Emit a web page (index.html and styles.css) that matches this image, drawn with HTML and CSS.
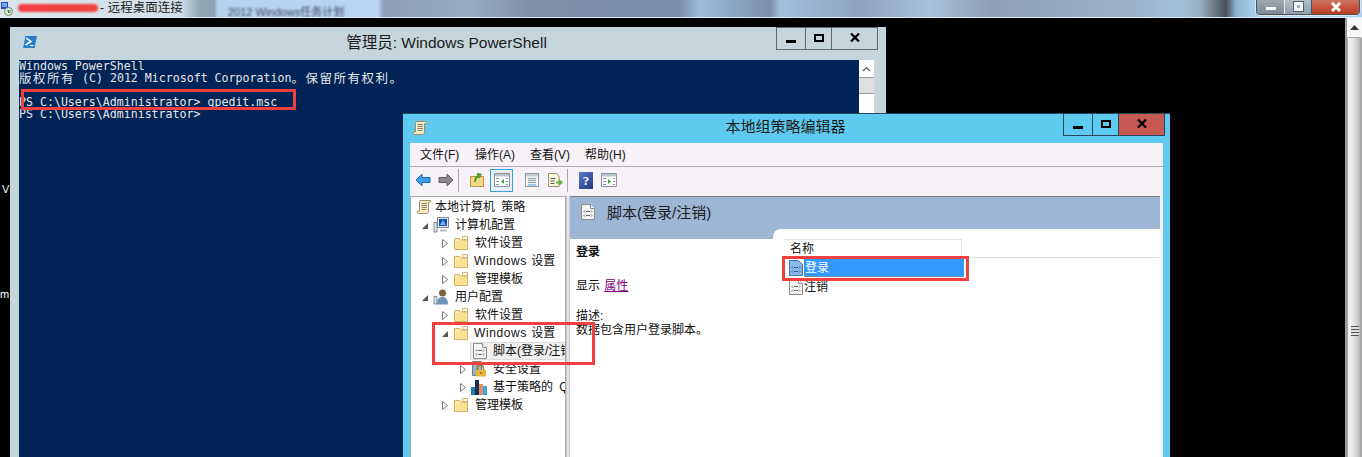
FILE: index.html
```html
<!DOCTYPE html>
<html lang="zh-CN">
<head>
<meta charset="utf-8">
<title>远程桌面连接</title>
<link rel="stylesheet" href="styles.css">
</head>
<body>
<svg class="defs" width="0" height="0" aria-hidden="true">
  <symbol id="scroll" viewBox="0 0 16 16">
    <path d="M4 1.500h10c1 0 1 2-.2 2H12.500v8.500c0 1.500-1 2.500-2 2.500H2.500c-1.500 0-2-1.800-.5-2.500h1.500V3c0-1 .2-1.500.5-1.500z" fill="#f6eecb" stroke="#a08f63"/>
    <path d="M5.500 4.500h5.500M5.500 6.500h5.500M5.500 8.500h5.500M5.500 10.500h5" stroke="#8d8468"/>
  </symbol>
  <symbol id="folder" viewBox="0 0 16 16">
    <path d="M1.500 3.500h5l1 1.500h7v9.500h-13z" fill="#fbe9ac" stroke="#d1b262"/>
    <path d="M9.500 1.500h5v3h-5z" fill="#fff" stroke="#d1b262"/>
    <path d="M2.500 6.500h11v7h-11z" fill="#f9e08e"/>
  </symbol>
  <symbol id="doc" viewBox="0 0 16 16">
    <path d="M1.500 .5h9l4 4v11h-13z" fill="#f4f4f4" stroke="#8c8c8c"/>
    <path d="M10.500 .5v4h4" fill="#fff" stroke="#8c8c8c"/>
    <path d="M5 6.500l-1 1 1 1M11 6.500l1 1-1 1M6 7.500h4M5 10.500l-1 1 1 1M11 10.500l1 1-1 1M6 11.500h4" fill="none" stroke="#666"/>
  </symbol>
  <symbol id="docsel" viewBox="0 0 16 16">
    <path d="M1.500 .5h9l4 4v11h-13z" fill="#8db7e6" stroke="#3f75b4"/>
    <path d="M5 6.500l-1 1 1 1M11 6.500l1 1-1 1M6 7.500h4M5 10.500l-1 1 1 1M11 10.500l1 1-1 1M6 11.500h4" fill="none" stroke="#2c5c96"/>
  </symbol>
  <symbol id="open" viewBox="0 0 8 9"><path d="M7 2v6H1z" fill="#555"/></symbol>
  <symbol id="closed" viewBox="0 0 8 9"><path d="M1.500 .5l5 4-5 4z" fill="#fff" stroke="#777"/></symbol>
  <symbol id="computer" viewBox="0 0 16 16">
    <path d="M4.500 .5h11v10h-11z" fill="#e6e9ee" stroke="#7d8794"/>
    <path d="M6 2h8v7H6z" fill="#0f4fb8"/>
    <path d="M7 8l3-5 3 5z" fill="#7fb2ee"/>
    <path d="M7 12.500h7v2H7z" fill="#b7bdc6"/>
    <path d="M1 5.500h3v9.500H1z" fill="#dfe5ea" stroke="#7c8a96"/>
  </symbol>
  <symbol id="user" viewBox="0 0 16 16">
    <circle cx="9.500" cy="4" r="3.500" fill="#7d5f45"/>
    <path d="M4 15.500c0-5 2-7.500 5.500-7.500s5.500 2.500 5.500 7.500z" fill="#6f92ba"/>
    <path d="M1 7.500h3v7.500H1z" fill="#dfe5ea" stroke="#7c8a96"/>
  </symbol>
  <symbol id="lock" viewBox="0 0 16 16">
    <path d="M1.500 .5h9v14h-9z" fill="#9db0c2" stroke="#6e7f90"/>
    <path d="M6.500 9V7a3 3 0 0 1 6 0v2" fill="none" stroke="#a37c1f" stroke-width="1.500"/>
    <path d="M5 9h10v6.500H5z" fill="#e2b636"/>
    <path d="M9.500 11h1v2h-1z" fill="#6b4f0e"/>
  </symbol>
  <symbol id="bars" viewBox="0 0 16 16">
    <path d="M0 8h4v8H0z" fill="#1c7fb4"/>
    <path d="M4 1h4v15H4z" fill="#1a2f4e"/>
    <path d="M8 5h4v11H8z" fill="#e98a6d"/>
    <path d="M12 7h4v9h-4z" fill="#3fa7d8"/>
  </symbol>
</svg>

<header class="rdp-bar">
  <svg class="rdp-icon" viewBox="0 0 12 14" width="12" height="14">
    <path d="M0 0h7v7H0z" fill="#2646c8"/>
    <path d="M1 1h5v4H1z" fill="#7aa6f0"/>
    <circle cx="7.500" cy="9.500" r="4" fill="#e8efe6" stroke="#5d8a5d"/>
    <path d="M6 9.500l1.500-1.500v3M9 8v3" stroke="#2f7d32" fill="none"/>
  </svg>
  <span class="blur-red"></span>
  <span class="rdp-title">- 远程桌面连接</span>
  <span class="blur-tab">2012 Windows任务计划</span>
  <div class="rdp-controls">
    <span class="rc rc-min"><i></i></span>
    <span class="rc rc-max"><i></i></span>
    <span class="rc rc-close">
      <svg viewBox="0 0 12 10" width="12" height="10"><path d="M2 1l8 8M10 1L2 9" stroke="#fff" stroke-width="3"/></svg>
    </span>
  </div>
</header>

<main class="desktop">
  <span class="edge edge-v">V</span>
  <span class="edge edge-m">m</span>

  <section class="win ps-win">
    <div class="ps-title">
      <svg class="ps-icon" viewBox="0 0 16 14" width="16" height="14">
        <path d="M3 .5h12.500L13 13.500H.5z" fill="#2a7fc4" stroke="#bcd9ee"/>
        <path d="M4 3l5 3.500L3.500 10" fill="none" stroke="#fff" stroke-width="1.500"/>
        <path d="M8 10.500h3.500" stroke="#fff"/>
      </svg>
      <span class="win-caption ps-caption">管理员: Windows PowerShell</span>
      <div class="wbtns">
        <span class="wb wb-min"><i></i></span>
        <span class="wb wb-max"><i></i></span>
        <span class="wb wb-x"><svg viewBox="0 0 10 9" width="10" height="9"><path d="M1 .5l8 8M9 .5l-8 8" stroke="#000" stroke-width="2.200"/></svg></span>
      </div>
    </div>
    <div class="ps-body">
      <div class="console">
        <div class="cl">Windows PowerShell</div>
        <div class="cl"><span class="zh">版权所有</span> (C) 2012 Microsoft Corporation<span class="zh">。保留所有权利。</span></div>
        <div class="cl"></div>
        <div class="cl">PS C:\Users\Administrator&gt; gpedit.msc</div>
        <div class="cl">PS C:\Users\Administrator&gt;</div>
      </div>
      <div class="ps-scroll">
        <span class="ps-up"><svg viewBox="0 0 9 6" width="9" height="6"><path d="M1 5l3.500-3.500L8 5" fill="none" stroke="#555" stroke-width="1.200"/></svg></span>
        <span class="ps-thumb"></span>
      </div>
    </div>
  </section>

  <section class="win gp-win">
    <div class="gp-title">
      <svg class="gp-icon" width="16" height="16"><use href="#scroll"/></svg>
      <span class="win-caption gp-caption">本地组策略编辑器</span>
      <div class="wbtns">
        <span class="wb wb-min"><i></i></span>
        <span class="wb wb-max"><i></i></span>
        <span class="wb wb-x wb-red"><svg viewBox="0 0 10 9" width="10" height="9"><path d="M1 .5l8 8M9 .5l-8 8" stroke="#000" stroke-width="2.200"/></svg></span>
      </div>
    </div>
    <div class="gp-inner">
      <nav class="menu">
        <span>文件(F)</span><span>操作(A)</span><span>查看(V)</span><span>帮助(H)</span>
      </nav>
      <div class="toolbar">
        <svg class="tb tb-back" viewBox="0 0 16 14" width="16" height="14"><path d="M1 7l6-6v3.500h8v5H7V13z" fill="#3fa0ea" stroke="#1c67b0"/></svg>
        <svg class="tb tb-fwd" viewBox="0 0 16 14" width="16" height="14"><path d="M15 7L9 1v3.500H1v5h8V13z" fill="#8a8a8a" stroke="#5e5e5e"/></svg>
        <span class="tb-sep"></span>
        <svg class="tb tb-up" viewBox="0 0 16 16" width="16" height="16"><path d="M1.500 4.500h13v10h-13z" fill="#f6d88a" stroke="#b9963f"/><path d="M6 10c0-4 2-6 5-7M8 2l3.500.5L10 6" fill="none" stroke="#4f9d2c" stroke-width="2"/></svg>
        <span class="tb-active"><svg viewBox="0 0 16 14" width="16" height="14"><path d="M.5 .5h15v13H.5z" fill="#fff" stroke="#8a939c"/><path d="M1 1h14v2.500H1z" fill="#b9c4cc"/><path d="M2 5h3v1H2zM2 8h3v1H2zM2 11h3v1H2zM12 5h2v1h-2zM12 8h2v1h-2zM12 11h2v1h-2z" fill="#8a939c"/><path d="M10 6v5L7 8.500z" fill="#3da23a"/></svg></span>
        <svg class="tb tb-list" viewBox="0 0 16 16" width="16" height="16"><path d="M1.500 1.500h13v13h-13z" fill="#f2f4f5" stroke="#8d969d"/><path d="M2 2h12v2.500H2z" fill="#c5ced5"/><path d="M4 6.500h8M4 8.500h8M4 10.500h8" stroke="#8d969d"/><path d="M4 13h8" stroke="#4aa3df"/></svg>
        <svg class="tb tb-export" viewBox="0 0 16 16" width="16" height="16"><path d="M1.500 1.500h8l2.500 2.500v10.500H1.500z" fill="#fbf6dc" stroke="#9a9476"/><path d="M3.500 6.500h5M3.500 9h4M3.500 11.500h4" stroke="#555"/><path d="M9 9.500h3V7l4 3.500-4 3.500v-2.500H9z" fill="#5fb83a"/></svg>
        <span class="tb-sep tb-sep2"></span>
        <span class="tb-help">?</span>
        <svg class="tb tb-panel" viewBox="0 0 16 14" width="16" height="14"><path d="M.5 .5h15v13H.5z" fill="#fff" stroke="#8a939c"/><path d="M1 1h14v2.500H1z" fill="#b9c4cc"/><path d="M2 5h3v1H2zM2 8h3v1H2zM2 11h3v1H2zM12 5h2v1h-2zM12 8h2v1h-2zM12 11h2v1h-2z" fill="#8a939c"/><path d="M7 6v5l3-2.500z" fill="#3da23a"/></svg>
      </div>
      <div class="panes">
        <aside class="tree">
          <div class="row root"><svg class="ti ti-root" width="16" height="16"><use href="#scroll"/></svg><span class="wide">本地计算机 策略</span></div>
          <div class="row l1"><svg class="tw" width="8" height="9"><use href="#open"/></svg><svg class="ti" width="16" height="16"><use href="#computer"/></svg><span>计算机配置</span></div>
          <div class="row l2"><svg class="tw" width="8" height="9"><use href="#closed"/></svg><svg class="ti" width="16" height="16"><use href="#folder"/></svg><span>软件设置</span></div>
          <div class="row l2"><svg class="tw" width="8" height="9"><use href="#closed"/></svg><svg class="ti" width="16" height="16"><use href="#folder"/></svg><span class="win-name"><b>Windows</b> 设置</span></div>
          <div class="row l2"><svg class="tw" width="8" height="9"><use href="#closed"/></svg><svg class="ti" width="16" height="16"><use href="#folder"/></svg><span>管理模板</span></div>
          <div class="row l1"><svg class="tw" width="8" height="9"><use href="#open"/></svg><svg class="ti" width="16" height="16"><use href="#user"/></svg><span>用户配置</span></div>
          <div class="row l2"><svg class="tw" width="8" height="9"><use href="#closed"/></svg><svg class="ti" width="16" height="16"><use href="#folder"/></svg><span>软件设置</span></div>
          <div class="row l2"><svg class="tw" width="8" height="9"><use href="#open"/></svg><svg class="ti" width="16" height="16"><use href="#folder"/></svg><span class="win-name"><b>Windows</b> 设置</span></div>
          <div class="row lsel"><span class="sel"><svg class="ti" width="16" height="16"><use href="#doc"/></svg><span>脚本(登录/注销)</span></span></div>
          <div class="row l3"><svg class="tw" width="8" height="9"><use href="#closed"/></svg><svg class="ti" width="16" height="16"><use href="#lock"/></svg><span>安全设置</span></div>
          <div class="row l3"><svg class="tw" width="8" height="9"><use href="#closed"/></svg><svg class="ti" width="16" height="16"><use href="#bars"/></svg><span class="wide">基于策略的 QoS</span></div>
          <div class="row l2"><svg class="tw" width="8" height="9"><use href="#closed"/></svg><svg class="ti" width="16" height="16"><use href="#folder"/></svg><span>管理模板</span></div>
        </aside>
        <div class="split"></div>
        <article class="detail">
          <div class="detail-head">
            <svg width="16" height="16"><use href="#doc"/></svg>
            <h1>脚本(登录/注销)</h1>
            <span class="notch"></span>
          </div>
          <div class="detail-body">
            <div class="desc">
              <p class="desc-name">登录</p>
              <p class="desc-show">显示 <a>属性</a></p>
              <p class="desc-label">描述:</p>
              <p>数据包含用户登录脚本。</p>
            </div>
            <div class="list">
              <div class="list-head"><span>名称</span></div>
              <div class="list-row list-row-sel"><svg width="16" height="16"><use href="#docsel"/></svg><span>登录</span></div>
              <div class="list-row"><svg width="16" height="16"><use href="#doc"/></svg><span>注销</span></div>
            </div>
          </div>
        </article>
      </div>
    </div>
  </section>

  <div class="rdp-scroll">
    <span class="rs-up"><svg viewBox="0 0 9 5" width="9" height="5"><path d="M0 5l4.500-5L9 5z" fill="#333"/></svg></span>
    <span class="rs-thumb"><i></i></span>
  </div>

  <span class="mark mark-cmd"></span>
  <span class="mark mark-tree"></span>
  <span class="mark mark-list"></span>
</main>
</body>
</html>
```
FILE: styles.css
```css
* { box-sizing: border-box; }
html, body { margin: 0; height: 457px; overflow: hidden; background: #000; }
body { font: 12px/14px "Liberation Sans", "Noto Sans CJK SC", sans-serif; color: #111; }
.defs { position: absolute; }
svg { display: block; flex: none; }

/* remote desktop title bar */
.rdp-bar {
  position: relative; height: 18px; overflow: hidden;
  display: flex; align-items: center;
  border-bottom: 1px solid #dfe9f2;
  background: linear-gradient(90deg,
    #dde5ec 0, #d2dee8 180px, #8fa8b8 200px, #8fa3b4 214px, #b6d2ee 218px, #b8d5f2 378px,
    #8c9db4 384px, #96aec4 470px, #7f8fa8 530px, #7b90aa 680px, #9dbedc 700px, #8ea9c4 730px,
    #7b8fa8 770px, #a2bfdc 780px, #8ea4bc 860px, #a8c2da 930px, #8d9fb4 990px, #9cb4cb 1140px,
    #a2c0da 1180px, #98b0c4 1200px, #5e6f76 1218px, #4a4e58 1226px, #8cb4d0 1236px, #a8d0ec 1256px);
}
.rdp-icon { margin: 1px 0 0 1px; }
.blur-red { position: absolute; left: 18px; top: 4px; width: 80px; height: 8px; background: #f04040; border-radius: 4px; filter: blur(1px); }
.rdp-title { position: absolute; left: 100px; top: 0; font-size: 12.500px; line-height: 16px; color: #222; }
.blur-tab { position: absolute; left: 228px; top: 6px; font-size: 11px; line-height: 12px; color: #39415a; filter: blur(1.200px); white-space: nowrap; }
.rdp-controls {
  position: absolute; left: 1256px; top: -1px; width: 104px; height: 16px;
  display: flex; border: 1px solid #4a5560; border-top: 0; border-radius: 0 0 4px 4px; overflow: hidden;
  box-shadow: 0 0 0 1px #dde6ee;
}
.rc { display: flex; align-items: center; justify-content: center; height: 100%; }
.rc-min { width: 28px; background: linear-gradient(#a0abb6, #7d8a96); border-right: 1px solid #e6ebef; }
.rc-min i { display: block; width: 10px; height: 3px; margin-top: 4px; background: #fff; }
.rc-max { width: 27px; background: linear-gradient(#b4c2ce, #8e9eac); border-right: 1px solid #4a5560; }
.rc-max i { display: block; width: 9px; height: 9px; border: 3px solid #f2f4f6; outline: 1px solid #56606a; }
.rc-close { flex: 1; background: linear-gradient(#c97c6c 0, #cc5a42 45%, #b83c24 100%); }

/* desktop */
.desktop { position: relative; height: 439px; background: #000; overflow: hidden; }
.edge { position: absolute; color: #fff; font-size: 11px; line-height: 12px; }
.edge-v { left: 2px; top: 165px; }
.edge-m { left: 0; top: 270px; }

.win { position: absolute; }
.win-caption { flex: 1; text-align: center; line-height: 20px; color: #1b1b1b; }
.wbtns { display: flex; height: 23px; border: 1px solid #5f696e; }
.wb { display: flex; justify-content: center; align-items: center; height: 100%; }
.wb + .wb { border-left: 1px solid #5f696e; }
.wb-min { width: 28px; }
.wb-min i { display: block; width: 10px; height: 3px; margin-top: 5px; background: #000; }
.wb-max { width: 26px; }
.wb-max i { display: block; width: 10px; height: 8px; border: 2px solid #000; margin-top: -2px; }
.wb-x { width: 46px; }
.wb-x svg { margin-top: -2px; }

/* PowerShell */
.ps-win { left: 10px; top: 9px; width: 876px; height: 440px; background: #c5d5dc; padding: 0 9px; }
.ps-title { display: flex; height: 33px; align-items: flex-start; position: relative; }
.ps-icon { position: absolute; left: 3px; top: 8px; }
.ps-caption { position: absolute; left: 0; width: 855px; padding-top: 6px; font-size: 15.500px; }
.ps-title .wbtns { margin-left: auto; margin-right: -1px; }
.ps-body { display: flex; height: 407px; }
.console {
  flex: none; width: 840px; height: 100%; background: #012456; color: #e6e6e6;
  font: 11.600px/12px "DejaVu Sans Mono", "Noto Sans CJK SC", monospace;
}
.cl { height: 12px; white-space: pre; }
.zh { display: inline-block; height: 12px; vertical-align: top; font-family: "Noto Sans CJK SC", sans-serif; font-size: 12.500px; line-height: 12px; letter-spacing: 1.500px; }
.ps-scroll { width: 17px; height: 100%; background: #fff; border-right: 2px solid #d4d4d4; display: flex; flex-direction: column; }
.ps-up { height: 18px; display: flex; align-items: center; justify-content: center; border-bottom: 1px solid #9a9a9a; }
.ps-thumb { height: 16px; background: #dfdfdf; border-bottom: 1px solid #9a9a9a; }

/* group policy editor */
.gp-win { left: 403px; top: 95px; width: 767px; height: 360px; background: #5fcaf0; border-top: 1px solid #26465a; padding: 0 7px; }
.gp-title { display: flex; height: 29px; align-items: flex-start; position: relative; }
.gp-icon { position: absolute; left: 2px; top: 6px; }
.gp-caption { position: absolute; left: 0; width: 751px; padding-top: 3px; font-size: 15px; }
.gp-title .wbtns { margin-left: auto; margin-right: -2px; border-top: 0; height: 22px; border-color: #26465a; }
.gp-title .wb + .wb { border-color: #26465a; }
.wb-red { background: #c65a52; }
.gp-inner { height: 331px; background: #f6f2f7; display: flex; flex-direction: column; }
.menu { display: flex; height: 24px; padding: 5px 0 0 10px; border-bottom: 1px solid #a9a9b3; }
.menu span { width: 55px; }
.toolbar { display: flex; height: 29px; align-items: center; padding: 0 0 3px 5px; }
.tb-back { margin-right: 7px; }
.tb-fwd { margin-right: 4px; }
.tb-sep { width: 1px; height: 23px; background: #a8a8a8; margin-right: 10px; }
.tb-up { margin-right: 5px; }
.tb-active { width: 23px; height: 23px; border: 1px solid #3ea0dc; background: #e6f2fa; display: flex; align-items: center; justify-content: center; margin-right: 11px; }
.tb-list { margin-right: 7px; }
.tb-export { margin-right: 4px; }
.tb-sep2 { margin-right: 11px; }
.tb-help { width: 14px; height: 17px; background: linear-gradient(135deg, #5a78c8, #22397f); color: #fff; font: bold 13px/17px "Liberation Serif", serif; text-align: center; margin-right: 8px; }

.panes { flex: 1; display: flex; min-height: 0; }
.tree { width: 156px; background: #fff; border: 1px solid #a8a8a8; border-bottom: 0; padding-top: 1px; overflow: hidden; }
.row { display: flex; align-items: center; height: 18px; white-space: nowrap; overflow: hidden; }
.ti { margin-right: 6px; }
.tw { margin-right: 4px; }
.root { padding-left: 5px; }
.ti-root { margin-right: 3px; }
.l1 { padding-left: 10px; }
.l2 { padding-left: 30px; }
.l3 { padding-left: 48px; }
.lsel { padding-left: 59px; }
.wide { word-spacing: 3px; }
.win-name { margin-left: -1px; }
.win-name b { font-weight: 400; letter-spacing: .6px; margin-right: 1px; }
.sel { flex: 1; height: 18px; display: flex; align-items: center; padding-left: 2px; background: #f0f0f0; border: 1px solid #dcdcdc; border-right: 0; overflow: hidden; }
.sel .ti { margin-left: -1px; margin-right: 5px; }
.split { width: 4px; background: linear-gradient(90deg, #b9b9c0 0, #f6f2f7 50%, #b9b9c0 100%); }
.detail { flex: none; width: 590px; background: #fff; display: flex; flex-direction: column; border-top: 1px solid #7f7f7f; }
.detail-head { position: relative; height: 42px; background: #9cb6d4; display: flex; align-items: flex-start; padding: 7px 0 0 10px; }
.detail-head h1 { margin: 0 0 0 11px; font-weight: 400; font-size: 15px; line-height: 18px; color: #1b1b1b; }
.notch { position: absolute; left: 203px; right: 0; top: 32px; bottom: 0; background: #fff; border-radius: 8px 0 0 0; }
.detail-body { flex: 1; display: flex; }
.desc { width: 214px; padding: 6px 0 0 6px; }
.desc p { margin: 0; }
.desc-name { font-weight: 700; }
.desc .desc-show { margin-top: 20px; }
.desc-show a { color: #800080; text-decoration: underline; margin-left: 1px; }
.desc .desc-label { margin-top: 16px; }
.list { flex: 1; }
.list-head { width: 178px; height: 18px; border: 1px solid #e4e4e4; border-width: 1px 1px 0 0; padding: 2px 0 0 6px; position: relative; }
.list-head::after { content: ""; position: absolute; left: 0; top: 17px; width: 376px; border-top: 1px solid #e4e4e4; }
.list-row { display: flex; align-items: center; height: 19px; padding-left: 4px; }
.list-row-sel { margin-top: 1px; }
.list-row-sel span { width: 160px; height: 19px; padding: 2px 0 0 1px; background: #3399ff; color: #fff; border: 1px dotted #b08a55; border-width: 1px 0; }

/* outer scrollbar */
.rdp-scroll { position: absolute; left: 1345px; top: 0; width: 17px; height: 439px; background: #f4f4f4; border-left: 2px solid #9a9a9a; display: flex; flex-direction: column; }
.rs-up { height: 19px; display: flex; align-items: center; justify-content: center; background: #f8f8f8; }
.rs-thumb { flex: 1; display: flex; align-items: center; justify-content: center; border: 1px solid #a4a4a4; border-bottom: 0; border-radius: 2px 2px 0 0; background: linear-gradient(90deg, #f4f4f4 0, #e4e4e4 45%, #c4c4c4 80%, #a8a8a8 100%); padding-top: 166px; }
.rs-thumb i { display: block; width: 8px; height: 10px; background: repeating-linear-gradient(#555 0, #555 1px, #ddd 1px, #ddd 3px); }

/* red annotations */
.mark { position: absolute; border: 3px solid #f0403f; }
.mark-cmd { left: 21px; top: 71px; width: 275px; height: 21px; }
.mark-tree { left: 432px; top: 304px; width: 163px; height: 43px; }
.mark-list { left: 782px; top: 238px; width: 187px; height: 25px; }
```
